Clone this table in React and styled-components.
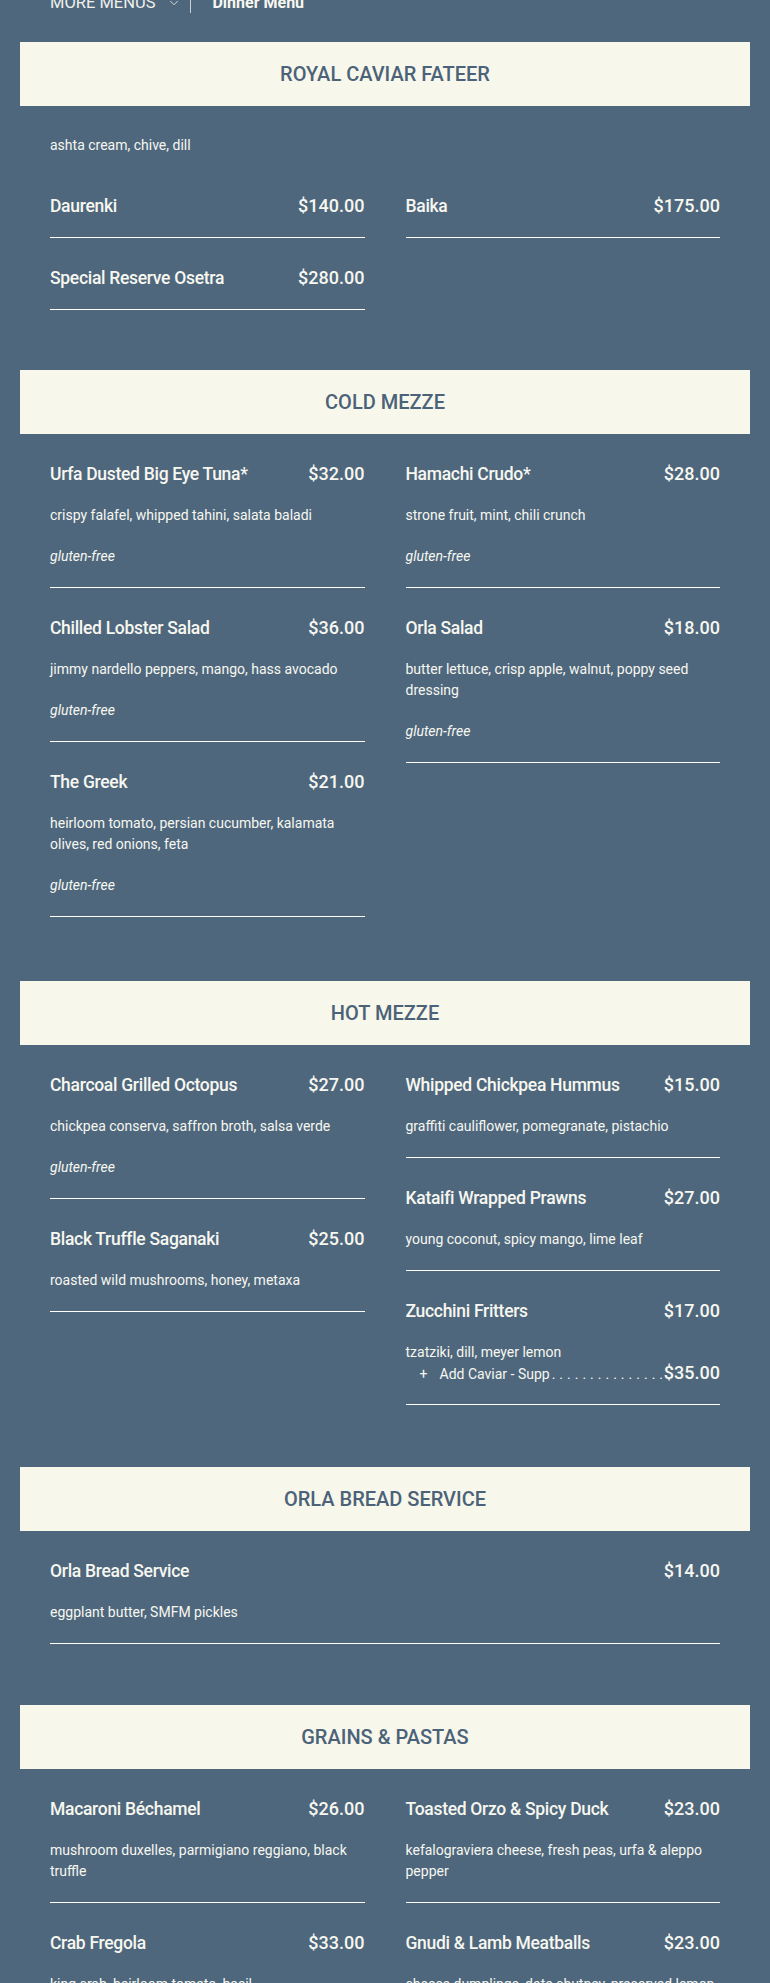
import React from "react";
import styled, { createGlobalStyle } from "styled-components";
import { ChevronDown } from "lucide-react";

const GlobalStyle = createGlobalStyle`
  body {
    margin: 0;
    background: #4e677d;
    font-family: Roboto, "Liberation Sans", sans-serif;
    color: #f7f7f0;
  }
`;

const Page = styled.div`
  padding: 0 20px 40px;
`;

const Nav = styled.nav`
  display: flex;
  align-items: center;
  height: 20px;
  margin-top: -7px;
  padding-left: 30px;
  font-size: 16.5px;
  line-height: 20px;
`;

const NavLink = styled.span`
  text-transform: uppercase;
  color: #f0f0ea;
`;

const Chevron = styled(ChevronDown)`
  margin-left: 12px;
  color: #e8e8e0;
`;

const Divider = styled.span`
  width: 1px;
  height: 20px;
  margin: 0 21px 0 9px;
  background: #c9d0d6;
`;

const Current = styled.span`
  font-weight: 700;
  font-size: 16px;
`;

const Section = styled.section`
  margin-top: ${(p) => p.$space}px;
`;

const Header = styled.h2`
  display: flex;
  align-items: center;
  justify-content: center;
  height: 64px;
  margin: 0;
  background: #f7f7eb;
  color: #4b6278;
  font-size: 20px;
  font-weight: 500;
  text-transform: uppercase;
`;

const Body = styled.div`
  padding: 0 30px;
`;

const Note = styled.p`
  margin: 29px 0 10px;
  font-size: 14px;
  line-height: 21px;
`;

const Columns = styled.div`
  display: grid;
  grid-template-columns: ${(p) =>
    p.$single ? "minmax(0, 1fr)" : "repeat(2, minmax(0, 1fr))"};
  column-gap: 41px;
  align-items: start;
`;

const Column = styled.div`
  display: flex;
  flex-direction: column;
  min-width: 0;
`;

const Item = styled.div`
  padding: 29px 0 20px;
  border-bottom: 1px solid #ffffff;
`;

const ItemHead = styled.div`
  display: flex;
  justify-content: space-between;
  align-items: baseline;
  gap: 16px;
  font-weight: 500;
  line-height: 22px;
`;

const Title = styled.span`
  font-size: 17.5px;
  letter-spacing: -0.3px;
`;

const Price = styled.span`
  font-size: 18px;
`;

const Desc = styled.p`
  margin: 20px 0 0;
  font-size: 14px;
  line-height: 21px;
`;

const Tag = styled.p`
  margin: 20px 0 0;
  font-size: 14px;
  line-height: 21px;
  font-style: italic;
`;

const Addon = styled.div`
  display: flex;
  align-items: baseline;
  padding-left: 14px;
  font-size: 14px;
  line-height: 20px;
`;

const Plus = styled.span`
  width: 20px;
`;

const Dots = styled.span`
  flex: 1;
  min-width: 0;
  overflow: hidden;
  white-space: nowrap;
  letter-spacing: 4px;
  padding-left: 2px;
  &::after {
    content: "........................................";
  }
`;

const AddonPrice = styled.span`
  font-size: 18px;
  font-weight: 500;
`;

const menu = [
  {
    name: "Royal Caviar Fateer",
    space: 29,
    note: "ashta cream, chive, dill",
    columns: [
      [
        { title: "Daurenki", price: "$140.00" },
        { title: "Special Reserve Osetra", price: "$280.00" },
      ],
      [{ title: "Baika", price: "$175.00" }],
    ],
  },
  {
    name: "Cold Mezze",
    space: 60,
    columns: [
      [
        {
          title: "Urfa Dusted Big Eye Tuna*",
          price: "$32.00",
          desc: "crispy falafel, whipped tahini, salata baladi",
          tag: "gluten-free",
        },
        {
          title: "Chilled Lobster Salad",
          price: "$36.00",
          desc: "jimmy nardello peppers, mango, hass avocado",
          tag: "gluten-free",
        },
        {
          title: "The Greek",
          price: "$21.00",
          desc: "heirloom tomato, persian cucumber, kalamata olives, red onions, feta",
          tag: "gluten-free",
        },
      ],
      [
        {
          title: "Hamachi Crudo*",
          price: "$28.00",
          desc: "strone fruit, mint, chili crunch",
          tag: "gluten-free",
        },
        {
          title: "Orla Salad",
          price: "$18.00",
          desc: "butter lettuce, crisp apple, walnut, poppy seed dressing",
          tag: "gluten-free",
        },
      ],
    ],
  },
  {
    name: "Hot Mezze",
    space: 64,
    columns: [
      [
        {
          title: "Charcoal Grilled Octopus",
          price: "$27.00",
          desc: "chickpea conserva, saffron broth, salsa verde",
          tag: "gluten-free",
        },
        {
          title: "Black Truffle Saganaki",
          price: "$25.00",
          desc: "roasted wild mushrooms, honey, metaxa",
        },
      ],
      [
        {
          title: "Whipped Chickpea Hummus",
          price: "$15.00",
          desc: "graffiti cauliflower, pomegranate, pistachio",
        },
        {
          title: "Kataifi Wrapped Prawns",
          price: "$27.00",
          desc: "young coconut, spicy mango, lime leaf",
        },
        {
          title: "Zucchini Fritters",
          price: "$17.00",
          desc: "tzatziki, dill, meyer lemon",
          addon: { name: "Add Caviar - Supp", price: "$35.00" },
        },
      ],
    ],
  },
  {
    name: "Orla Bread Service",
    space: 62,
    single: true,
    columns: [
      [
        {
          title: "Orla Bread Service",
          price: "$14.00",
          desc: "eggplant butter, SMFM pickles",
        },
      ],
    ],
  },
  {
    name: "Grains & Pastas",
    space: 61,
    columns: [
      [
        {
          title: "Macaroni Béchamel",
          price: "$26.00",
          desc: "mushroom duxelles, parmigiano reggiano, black truffle",
        },
        {
          title: "Crab Fregola",
          price: "$33.00",
          desc: "king crab, heirloom tomato, basil",
        },
      ],
      [
        {
          title: "Toasted Orzo & Spicy Duck",
          price: "$23.00",
          desc: "kefalograviera cheese, fresh peas, urfa & aleppo pepper",
        },
        {
          title: "Gnudi & Lamb Meatballs",
          price: "$23.00",
          desc: "cheese dumplings, date chutney, preserved lemon",
        },
      ],
    ],
  },
];

const MenuItem = ({ item }) => (
  <Item>
    <ItemHead>
      <Title>{item.title}</Title>
      <Price>{item.price}</Price>
    </ItemHead>
    {item.desc && <Desc>{item.desc}</Desc>}
    {item.tag && <Tag>{item.tag}</Tag>}
    {item.addon && (
      <Addon>
        <Plus>+</Plus>
        <span>{item.addon.name}</span>
        <Dots />
        <AddonPrice>{item.addon.price}</AddonPrice>
      </Addon>
    )}
  </Item>
);

const App = () => {
  return (
    <Page>
      <GlobalStyle />
      <Nav>
        <NavLink>More Menus</NavLink>
        <Chevron size={14} strokeWidth={1.5} />
        <Divider />
        <Current>Dinner Menu</Current>
      </Nav>
      {menu.map((section) => (
        <Section key={section.name} $space={section.space}>
          <Header>{section.name}</Header>
          <Body>
            {section.note && <Note>{section.note}</Note>}
            <Columns $single={section.single}>
              {section.columns.map((col, j) => (
                <Column key={j}>
                  {col.map((item) => (
                    <MenuItem key={item.title} item={item} />
                  ))}
                </Column>
              ))}
            </Columns>
          </Body>
        </Section>
      ))}
    </Page>
  );
};

export default App;
